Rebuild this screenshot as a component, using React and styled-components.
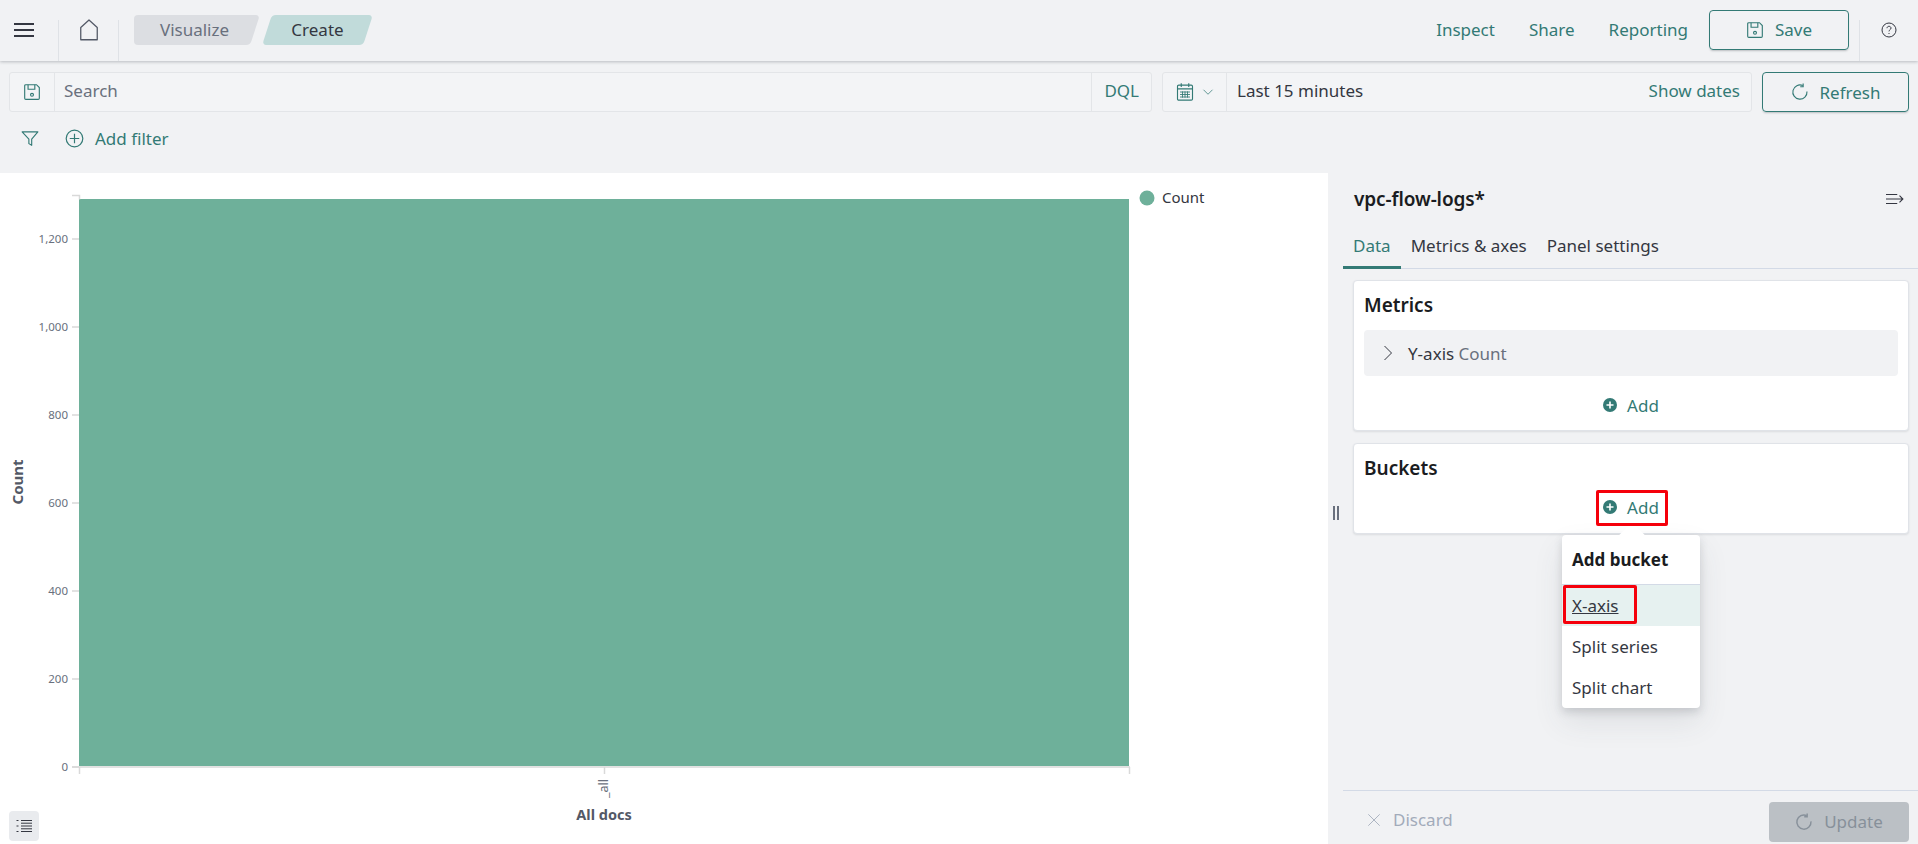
import React from "react";
import styled, { createGlobalStyle, css } from "styled-components";

const teal = "#337a75";
const pageBg = "#f1f2f4";
const line = "#dfe2e6";

const Global = createGlobalStyle`
  html, body {
    margin: 0;
    height: 100%;
    overflow: hidden;
    background: ${pageBg};
    font-family: "Noto Sans", "Liberation Sans", sans-serif;
    font-size: 17px;
    color: #343741;
  }
  * { box-sizing: border-box; }
`;

const Page = styled.div`
  display: flex;
  flex-direction: column;
  height: 844px;
`;

/* ---- top bar ---- */
const TopBar = styled.header`
  display: flex;
  align-items: stretch;
  height: 61px;
  flex-shrink: 0;
  background: ${pageBg};
  box-shadow: 0 1px 3px rgba(60, 66, 77, 0.3);
  position: relative;
`;
const IconCell = styled.div`
  display: flex;
  align-items: center;
  justify-content: center;
  width: ${(p) => p.$w}px;
  padding-bottom: 2px;
  border-right: ${(p) => (p.$divider ? `1px solid ${line}` : "none")};
  margin-top: ${(p) => (p.$divider ? "20px" : "0")};
  & > svg { margin-top: ${(p) => (p.$divider ? "-20px" : "0")}; }
`;
const Crumbs = styled.nav`
  display: flex;
  align-items: center;
  gap: 12px;
  margin-left: 15px;
  padding-bottom: 2px;
`;
const Crumb = styled.span`
  position: relative;
  display: flex;
  align-items: center;
  justify-content: center;
  width: ${(p) => p.$w}px;
  height: 30px;
  color: ${(p) => (p.$active ? "#343741" : "#69707d")};
  z-index: 0;
  &::before {
    content: "";
    position: absolute;
    inset: 0 0 0 ${(p) => (p.$first ? "10px" : "0")};
    z-index: -1;
    border-radius: 4px;
    transform: skewX(-18deg);
    background: ${(p) => (p.$active ? "#c1dbda" : "#dcdee2")};
  }
  ${(p) =>
    p.$first &&
    css`
      &::after {
        content: "";
        position: absolute;
        inset: 0 40px 0 0;
        z-index: -1;
        border-radius: 4px;
        background: #dcdee2;
      }
    `}
`;
const Spacer = styled.div`
  flex: 1;
`;
const NavLinks = styled.div`
  display: flex;
  align-items: center;
  gap: 34px;
  padding-bottom: 2px;
`;
const NavLink = styled.span`
  color: ${teal};
`;
const OutlineButton = styled.div`
  display: flex;
  align-items: center;
  justify-content: center;
  gap: 11px;
  width: ${(p) => p.$w}px;
  height: 40px;
  border: 1px solid ${teal};
  border-radius: 4px;
  color: ${teal};
  box-shadow: 0 2px 2px -1px rgba(60, 66, 77, 0.3);
`;
const SaveSlot = styled.div`
  display: flex;
  align-items: center;
  margin-left: 21px;
  padding-bottom: 2px;
`;
const HelpCell = styled.div`
  display: flex;
  align-items: center;
  justify-content: center;
  width: 59px;
  margin-left: 10px;
  margin-top: 20px;
  padding-bottom: 22px;
  border-left: 1px solid ${line};
`;

/* ---- query bar ---- */
const QueryRow = styled.div`
  display: flex;
  gap: 10px;
  height: 40px;
  margin: 11px 9px 0 9px;
  flex-shrink: 0;
`;
const Field = styled.div`
  display: flex;
  align-items: center;
  flex: ${(p) => (p.$grow ? "1" : "none")};
  width: ${(p) => (p.$w ? `${p.$w}px` : "auto")};
  height: 40px;
  background: #f3f4f6;
  border: 1px solid #e3e5e8;
  border-radius: 3px;
`;
const FieldIcon = styled.div`
  display: flex;
  align-items: center;
  justify-content: center;
  gap: 7px;
  width: ${(p) => p.$w}px;
  height: 100%;
  border-right: 1px solid #e3e5e8;
  flex-shrink: 0;
`;
const FieldText = styled.span`
  flex: 1;
  padding-left: ${(p) => p.$pad}px;
  padding-bottom: 3px;
  color: ${(p) => p.$color};
`;
const FieldTail = styled.span`
  padding: 0 ${(p) => p.$pad}px 3px;
  height: 100%;
  display: flex;
  align-items: center;
  color: ${teal};
  border-left: ${(p) => (p.$divider ? "1px solid #e3e5e8" : "none")};
`;

const FilterRow = styled.div`
  display: flex;
  align-items: center;
  height: 61px;
  padding: 0 0 9px 21px;
  flex-shrink: 0;
`;
const AddFilter = styled.span`
  display: flex;
  align-items: center;
  gap: 11px;
  margin-left: 26px;
  color: ${teal};
`;

/* ---- workspace ---- */
const Workspace = styled.main`
  display: flex;
  flex: 1;
  min-height: 0;
`;
const ChartPanel = styled.section`
  position: relative;
  width: 1328px;
  background: #fff;
  flex-shrink: 0;
`;
const ChartSvg = styled.svg`
  display: block;
  width: 1328px;
  height: 671px;
  font-family: "Noto Sans", sans-serif;
`;
const ListButton = styled.div`
  position: absolute;
  left: 9px;
  bottom: 3px;
  display: flex;
  align-items: center;
  justify-content: center;
  width: 30px;
  height: 30px;
  border-radius: 4px;
  background: #e9ebee;
`;

const SidePanel = styled.aside`
  position: relative;
  display: flex;
  flex: 1;
  flex-direction: column;
  background: ${pageBg};
  padding-left: 15px;
`;
const Handle = styled.div`
  position: absolute;
  left: 5px;
  top: 333px;
  width: 6px;
  height: 14px;
  border-left: 2px solid #69707d;
  border-right: 2px solid #69707d;
`;
const PanelHead = styled.div`
  display: flex;
  align-items: center;
  justify-content: space-between;
  height: 52px;
  padding: 0 14px 0 11px;
`;
const IndexName = styled.h2`
  margin: 0;
  font-size: 19px;
  font-weight: 600;
  letter-spacing: -0.1px;
  color: #1a1c21;
`;
const Tabs = styled.div`
  display: flex;
  height: 44px;
  border-bottom: 1px solid #d3dae6;
`;
const Tab = styled.span`
  display: flex;
  align-items: center;
  justify-content: center;
  height: 44px;
  padding: 0 ${(p) => p.$pad}px 0;
  color: ${(p) => (p.$active ? teal : "#343741")};
  border-bottom: 3px solid ${(p) => (p.$active ? teal : "transparent")};
`;
const Cards = styled.div`
  display: flex;
  flex-direction: column;
  gap: 12px;
  margin: 11px 9px 0 10px;
`;
const Card = styled.div`
  position: relative;
  display: flex;
  flex-direction: column;
  height: ${(p) => p.$h}px;
  padding: 10px 10px 0;
  background: #fff;
  border: 1px solid #e0e3e8;
  border-radius: 4px;
  box-shadow: 0 1px 2px rgba(60, 66, 77, 0.12);
`;
const CardTitle = styled.h3`
  margin: 0;
  height: 28px;
  font-size: 19px;
  line-height: 28px;
  font-weight: 600;
  color: #1a1c21;
`;
const AggRow = styled.div`
  display: flex;
  align-items: center;
  gap: 12px;
  height: 46px;
  margin-top: 11px;
  padding-left: 16px;
  border-radius: 4px;
  background: ${pageBg};
`;
const AggName = styled.span`
  color: #343741;
  & > em {
    font-style: normal;
    color: #69707d;
  }
`;
const AddRow = styled.div`
  display: flex;
  justify-content: center;
  align-items: center;
  gap: 10px;
  height: 24px;
  margin-top: ${(p) => p.$top}px;
  color: ${teal};
`;
const Highlight = styled.div`
  position: absolute;
  left: ${(p) => p.$l}px;
  top: ${(p) => p.$t}px;
  width: ${(p) => p.$w}px;
  height: ${(p) => p.$h}px;
  border: 3px solid #f5000b;
  border-radius: 2px;
  pointer-events: none;
  z-index: 3;
`;
const Popover = styled.div`
  position: absolute;
  left: 234px;
  top: 362px;
  width: 138px;
  background: #fff;
  border-radius: 4px;
  box-shadow: 0 4px 8px rgba(60, 66, 77, 0.18), 0 14px 30px rgba(60, 66, 77, 0.1);
  z-index: 2;
  &::before {
    content: "";
    position: absolute;
    left: 61px;
    top: -9px;
    width: 18px;
    height: 18px;
    background: #fff;
    transform: rotate(45deg);
    z-index: -1;
  }
`;
const PopTitle = styled.div`
  display: flex;
  align-items: center;
  height: 50px;
  padding-left: 10px;
  font-weight: 700;
  color: #1a1c21;
  border-bottom: 1px solid #d3dae6;
`;
const PopItem = styled.div`
  display: flex;
  align-items: center;
  height: 41px;
  padding-left: 10px;
  color: #343741;
  background: ${(p) => (p.$hover ? "#e6f1f0" : "transparent")};
  text-decoration: ${(p) => (p.$hover ? "underline" : "none")};
`;
const PanelFooter = styled.footer`
  display: flex;
  align-items: center;
  justify-content: space-between;
  margin-top: auto;
  height: 54px;
  border-top: 1px solid #d3dae6;
  padding: 8px 9px 0 24px;
`;
const Discard = styled.span`
  display: flex;
  align-items: center;
  gap: 12px;
  margin-bottom: 4px;
  color: #a2abba;
`;
const UpdateButton = styled.div`
  display: flex;
  align-items: center;
  justify-content: center;
  gap: 11px;
  width: 140px;
  height: 40px;
  border-radius: 4px;
  background: #bbc0c5;
  color: #87909a;
`;

/* ---- icons ---- */
const Svg = ({ size = 16, color = teal, sw = 1, children }) => (
  <svg width={size} height={size} viewBox="0 0 16 16" fill="none" stroke={color} strokeWidth={sw}>
    {children}
  </svg>
);
const MenuIcon = () => (
  <svg width="20" height="16" viewBox="0 0 20 16" fill="none" stroke="#343741" strokeWidth="2">
    <path d="M0 2h20M0 8h20M0 14h20" />
  </svg>
);
const HomeIcon = () => (
  <Svg size={24} color="#535966" sw={0.85}>
    <path d="M2.5 14.5V6.3L8 1.3l5.5 5v8.2z" strokeLinejoin="round" />
  </Svg>
);
const SaveIcon = ({ size = 18 }) => (
  <Svg size={size}>
    <path d="M1.5 2.5a1 1 0 0 1 1-1h9.5l2.5 2.5v9.5a1 1 0 0 1-1 1h-11a1 1 0 0 1-1-1z" />
    <path d="M4.5 1.5v4h6v-4" />
    <circle cx="8" cy="10.5" r="1.3" />
  </Svg>
);
const FilterIcon = () => (
  <Svg size={18}>
    <path d="M1 2.5h14L9.5 9v5.5L7 13V9z" strokeLinejoin="round" />
  </Svg>
);
const PlusCircle = () => (
  <Svg size={19}>
    <circle cx="8" cy="8" r="7" />
    <path d="M8 4v8M4 8h8" />
  </Svg>
);
const CalendarIcon = () => (
  <Svg size={20} sw={0.9}>
    <rect x="2" y="2.5" width="12" height="12" rx="1" />
    <path d="M2 5.5h12M5 1v3M11 1v3" />
    <path d="M4 8h8M4 10h8M4 12h8M6 7.5v5M8 7.5v5M10 7.5v5" strokeWidth="0.7" />
  </Svg>
);
const ChevronDown = () => (
  <Svg size={12}>
    <path d="M2 5l6 6 6-6" />
  </Svg>
);
const RefreshIcon = ({ color = teal, sw = 1 }) => (
  <Svg size={18} color={color} sw={sw}>
    <path d="M10.5 2.3a6.3 6.3 0 1 0 3.7 5.2" />
    <path d="M10.8 0.5v2.8h-2.6" />
  </Svg>
);
const HelpIcon = () => (
  <Svg size={16} color="#343741">
    <circle cx="8" cy="8" r="7" />
    <path d="M6 6.2c0-1.2 1-1.9 2-1.9s2 .7 2 1.8c0 1.6-2 1.5-2 3.3" />
    <path d="M8 11v1" />
  </Svg>
);
const CollapseIcon = () => (
  <Svg size={18} color="#343741">
    <path d="M0 4h10M0 8h15M0 12h10M12 5l3 3-3 3" />
  </Svg>
);
const ChevronRight = () => (
  <Svg size={16} color="#343741">
    <path d="M4.5 1l7 7-7 7" />
  </Svg>
);
const AddDot = () => (
  <svg width="14" height="14" viewBox="0 0 14 14">
    <circle cx="7" cy="7" r="7" fill={teal} />
    <path d="M7 3.5v7M3.5 7h7" stroke="#fff" strokeWidth="1.6" />
  </svg>
);
const CrossIcon = () => (
  <Svg size={14} color="#a2abba">
    <path d="M1.5 1.5l13 13M14.5 1.5l-13 13" />
  </Svg>
);
const ListIcon = () => (
  <svg width="16" height="16" viewBox="0 0 16 16" stroke="#343741" strokeWidth="1">
    <path d="M0.5 2.5h2M0.5 8h2M0.5 13.5h2M5 2.5h11M5 5.2h11M5 8h11M5 10.8h11M5 13.5h11" />
  </svg>
);

/* ---- chart ---- */
const ticks = [0, 200, 400, 600, 800, 1000, 1200];
const zeroY = 594;
const yFor = (v) => zeroY - v * 0.44;

const Chart = () => (
  <ChartSvg viewBox="0 0 1328 671">
    <rect x="79" y="26" width="1050" height="567" fill="#6eb09a" />
    <path d="M72 22.5h7.5v4" stroke="#d9d9d9" strokeWidth="1.5" fill="none" />
    <path d="M72 594h1058M79.5 594v7M1129.5 594v7M604.5 594v7" stroke="#d9d9d9" strokeWidth="1.5" fill="none" />
    {ticks.map((t) => (
      <g key={t}>
        <path d={`M72 ${yFor(t)}h7`} stroke="#d9d9d9" strokeWidth="1.5" />
        <text x="68" y={yFor(t) + 4} textAnchor="end" fontSize="11.5" fill="#69707d">
          {t.toLocaleString("en-US")}
        </text>
      </g>
    ))}
    <text transform="translate(23 309) rotate(-90)" textAnchor="middle" fontSize="15" fontWeight="700" fill="#535966">
      Count
    </text>
    <text transform="translate(608 625) rotate(-90)" fontSize="12.5" fill="#69707d">
      _all
    </text>
    <text x="604" y="647" textAnchor="middle" fontSize="14.5" fontWeight="700" fill="#535966">
      All docs
    </text>
    <circle cx="1147" cy="25" r="7.5" fill="#6eb09a" />
    <text x="1162" y="30" fontSize="15" fill="#343741">
      Count
    </text>
  </ChartSvg>
);

export default function App() {
  return (
    <Page>
      <Global />
      <TopBar>
        <IconCell $w={48}>
          <MenuIcon />
        </IconCell>
        <IconCell $w={11} $divider />
        <IconCell $w={60} $divider>
          <HomeIcon />
        </IconCell>
        <Crumbs>
          <Crumb $first $w={121}>Visualize</Crumb>
          <Crumb $active $w={101}>Create</Crumb>
        </Crumbs>
        <Spacer />
        <NavLinks>
          <NavLink>Inspect</NavLink>
          <NavLink>Share</NavLink>
          <NavLink>Reporting</NavLink>
        </NavLinks>
        <SaveSlot>
          <OutlineButton $w={140}>
            <SaveIcon />
            Save
          </OutlineButton>
        </SaveSlot>
        <HelpCell>
          <HelpIcon />
        </HelpCell>
      </TopBar>

      <QueryRow>
        <Field $grow>
          <FieldIcon $w={45}>
            <SaveIcon />
          </FieldIcon>
          <FieldText $pad={9} $color="#69707d">Search</FieldText>
          <FieldTail $pad={12} $divider>DQL</FieldTail>
        </Field>
        <Field $w={590}>
          <FieldIcon $w={64}>
            <CalendarIcon />
            <ChevronDown />
          </FieldIcon>
          <FieldText $pad={10} $color="#343741">Last 15 minutes</FieldText>
          <FieldTail $pad={11}>Show dates</FieldTail>
        </Field>
        <OutlineButton $w={147}>
          <RefreshIcon />
          Refresh
        </OutlineButton>
      </QueryRow>

      <FilterRow>
        <FilterIcon />
        <AddFilter>
          <PlusCircle />
          Add filter
        </AddFilter>
      </FilterRow>

      <Workspace>
        <ChartPanel>
          <Chart />
          <ListButton>
            <ListIcon />
          </ListButton>
        </ChartPanel>
        <SidePanel>
          <Handle />
          <PanelHead>
            <IndexName>vpc-flow-logs*</IndexName>
            <CollapseIcon />
          </PanelHead>
          <Tabs>
            <Tab $active $pad={10}>Data</Tab>
            <Tab $pad={10}>Metrics &amp; axes</Tab>
            <Tab $pad={10}>Panel settings</Tab>
          </Tabs>
          <Cards>
            <Card $h={151}>
              <CardTitle>Metrics</CardTitle>
              <AggRow>
                <ChevronRight />
                <AggName>
                  Y-axis <em>Count</em>
                </AggName>
              </AggRow>
              <AddRow $top={17}>
                <AddDot />
                Add
              </AddRow>
            </Card>
            <Card $h={91}>
              <CardTitle>Buckets</CardTitle>
              <AddRow $top={13}>
                <AddDot />
                Add
              </AddRow>
            </Card>
          </Cards>
          <Highlight $l={268} $t={317} $w={72} $h={36} />
          <Popover>
            <PopTitle>Add bucket</PopTitle>
            <PopItem $hover>X-axis</PopItem>
            <PopItem>Split series</PopItem>
            <PopItem>Split chart</PopItem>
            <Highlight $l={1} $t={50} $w={74} $h={39} />
          </Popover>
          <PanelFooter>
            <Discard>
              <CrossIcon />
              Discard
            </Discard>
            <UpdateButton>
              <RefreshIcon color="#87909a" sw={1.3} />
              Update
            </UpdateButton>
          </PanelFooter>
        </SidePanel>
      </Workspace>
    </Page>
  );
}
